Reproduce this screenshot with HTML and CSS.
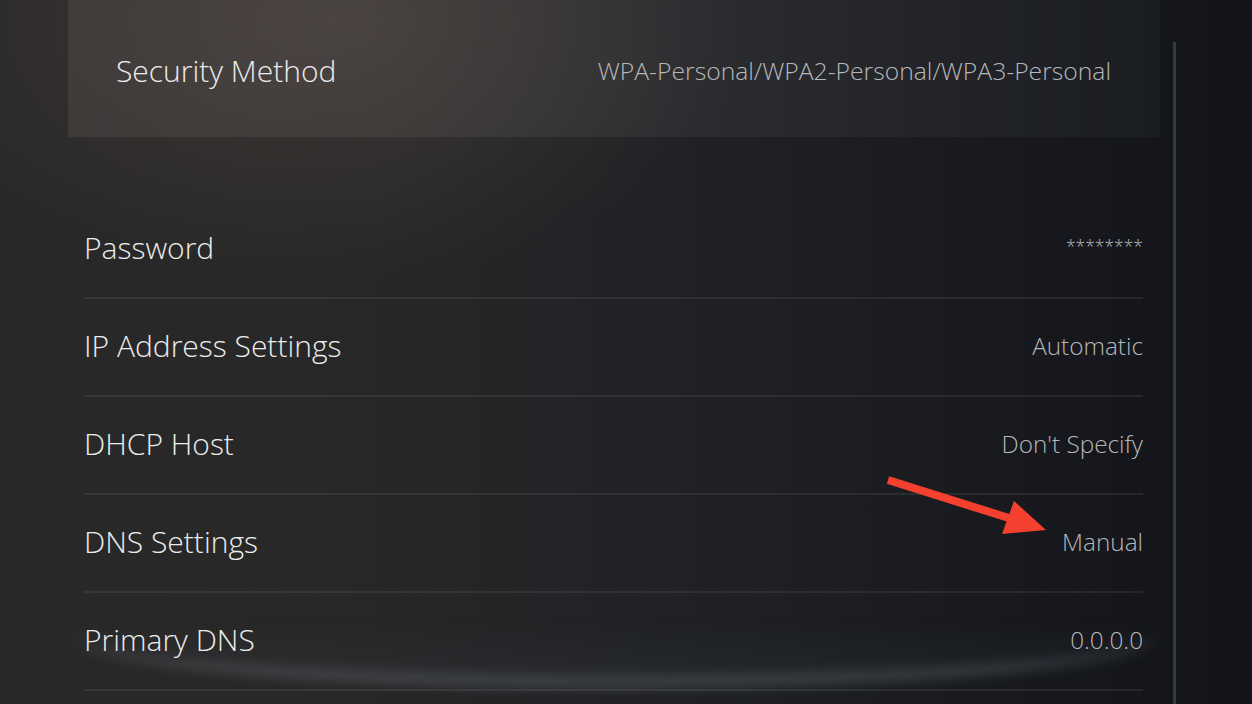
FILE: index.html
```html
<!DOCTYPE html>
<html lang="en">
<head>
<meta charset="utf-8">
<title>Network Settings</title>
<link rel="stylesheet" href="styles.css">
</head>
<body>
<div class="screen">
  <div class="glow"></div>
  <div class="layout">
    <div class="list">
      <div class="card">
        <span class="label">Security Method</span>
        <span class="value">WPA-Personal/WPA2-Personal/WPA3-Personal</span>
      </div>
      <div class="rows">
        <div class="row"><span class="label">Password</span><span class="value stars">********</span></div>
        <div class="row"><span class="label">IP Address Settings</span><span class="value">Automatic</span></div>
        <div class="row"><span class="label">DHCP Host</span><span class="value">Don't Specify</span></div>
        <div class="row"><span class="label">DNS Settings</span><span class="value">Manual</span></div>
        <div class="row"><span class="label">Primary DNS</span><span class="value">0.0.0.0</span></div>
      </div>
    </div>
    <div class="scrollbar"></div>
  </div>
  <svg class="arrow" width="1252" height="704" viewBox="0 0 1252 704">
    <line x1="888" y1="480" x2="1012" y2="519" stroke="#f4412f" stroke-width="8" stroke-linecap="butt"/>
    <polygon points="1014,501 1002,534 1046,530" fill="#f4412f"/>
  </svg>
</div>
</body>
</html>
```
FILE: styles.css
```css
html, body {
  margin: 0;
  padding: 0;
}
body {
  width: 1252px;
  height: 704px;
  overflow: hidden;
  background: #16181d;
  font-family: "Open Sans", "Noto Sans", sans-serif;
}
.screen {
  position: relative;
  width: 1252px;
  height: 704px;
  overflow: hidden;
  background:
    radial-gradient(ellipse 420px 260px at 330px 20px, rgba(90, 76, 70, 0.45), rgba(90, 76, 70, 0) 100%),
    linear-gradient(90deg, #2a2929 0%, #272728 30%, #1e2024 60%, #16181d 85%, #121419 100%);
}
.glow {
  position: absolute;
  left: 76px;
  top: 586px;
  width: 1080px;
  height: 90px;
  border-radius: 50%;
  border-bottom: 12px solid rgba(120, 125, 133, 0.34);
  background: linear-gradient(180deg, rgba(60, 64, 70, 0) 40%, rgba(60, 64, 70, 0.2) 100%);
  filter: blur(6px);
  pointer-events: none;
}
.layout {
  position: relative;
  display: flex;
  align-items: flex-start;
  height: 704px;
}
.list {
  width: 1092px;
  margin-left: 68px;
}
.card {
  height: 137px;
  box-sizing: border-box;
  padding: 4px 49px 0 48px;
  display: flex;
  align-items: center;
  justify-content: space-between;
  background: linear-gradient(90deg, rgba(255, 240, 230, 0.07) 0%, rgba(255, 245, 240, 0.06) 40%, rgba(200, 210, 230, 0.035) 100%);
}
.rows {
  margin: 64px 17px 0 16px;
}
.row {
  height: 93px;
  padding-bottom: 3px;
  border-bottom: 2px solid rgba(255, 255, 255, 0.07);
  display: flex;
  align-items: center;
  justify-content: space-between;
}
.label {
  font-size: 30px;
  font-weight: 300;
  color: #ececec;
}
.value {
  font-size: 24.3px;
  font-weight: 300;
  color: #b6b7b9;
}
.card .value {
  font-size: 24.7px;
}
.stars {
  font-size: 17.5px;
  color: #c0c1c3;
  position: relative;
  top: -2px;
}
.scrollbar {
  width: 3px;
  height: 662px;
  margin-top: 42px;
  margin-left: 13px;
  background: #363940;
}
.arrow {
  position: absolute;
  left: 0;
  top: 0;
  pointer-events: none;
}
```
